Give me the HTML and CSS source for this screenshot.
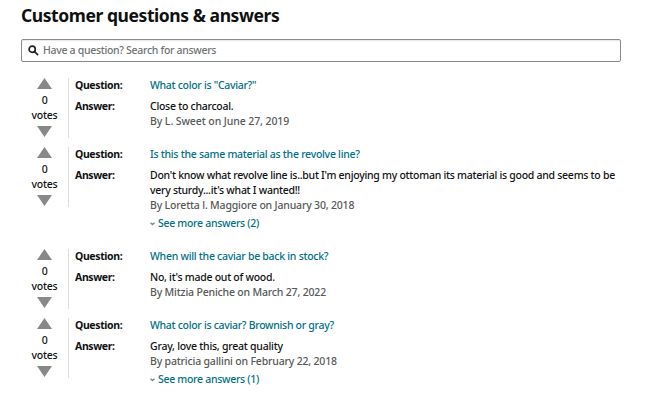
FILE: index.html
```html
<!DOCTYPE html>
<html lang="en">
<head>
<meta charset="utf-8">
<title>Customer questions &amp; answers</title>
<link rel="stylesheet" href="styles.css">
</head>
<body>
<main class="qa">
  <h1 class="title">Customer questions &amp; answers</h1>
  <div class="search">
    <svg class="search-icon" viewBox="0 0 11 11"><circle cx="4.2" cy="4.2" r="3.1"/><path d="M6.6 6.6 9.6 9.6"/></svg>
    <span class="placeholder">Have a question? Search for answers</span>
  </div>

  <section class="entry">
    <div class="votes"><i class="up"></i><span>0</span><span>votes</span><i class="down"></i></div>
    <div class="body">
      <div class="row"><b>Question:</b><div><a class="q1">What color is "Caviar?"</a></div></div>
      <div class="row"><b class="ans">Answer:</b><div><p class="a1">Close to charcoal.</p><p class="by by1">By L. Sweet on June 27, 2019</p></div></div>
    </div>
  </section>

  <section class="entry with-more">
    <div class="votes"><i class="up"></i><span>0</span><span>votes</span><i class="down"></i></div>
    <div class="body">
      <div class="row"><b>Question:</b><div><a class="q2">Is this the same material as the revolve line?</a></div></div>
      <div class="row"><b class="ans">Answer:</b><div><p class="a2">Don't know what revolve line is..but I'm enjoying my ottoman its material is good and seems to be</p><p class="a2b">very sturdy...it's what I wanted!!</p><p class="by by2">By Loretta l. Maggiore on January 30, 2018</p>
        <div class="more"><svg viewBox="0 0 5 4"><path d="M.5 .8 2.5 2.5 4.5 .8"/></svg><a>See more answers (2)</a></div></div></div>
    </div>
  </section>

  <section class="entry">
    <div class="votes"><i class="up"></i><span>0</span><span>votes</span><i class="down"></i></div>
    <div class="body">
      <div class="row"><b>Question:</b><div><a class="q3">When will the caviar be back in stock?</a></div></div>
      <div class="row"><b class="ans">Answer:</b><div><p class="a3">No, it's made out of wood.</p><p class="by by3">By Mitzia Peniche on March 27, 2022</p></div></div>
    </div>
  </section>

  <section class="entry with-more">
    <div class="votes"><i class="up"></i><span>0</span><span>votes</span><i class="down"></i></div>
    <div class="body">
      <div class="row"><b>Question:</b><div><a class="q4">What color is caviar? Brownish or gray?</a></div></div>
      <div class="row"><b class="ans">Answer:</b><div><p class="a4">Gray, love this, great quality</p><p class="by by4">By patricia gallini on February 22, 2018</p>
        <div class="more"><svg viewBox="0 0 5 4"><path d="M.5 .8 2.5 2.5 4.5 .8"/></svg><a>See more answers (1)</a></div></div></div>
    </div>
  </section>
</main>
</body>
</html>
```
FILE: styles.css
```css
* { box-sizing: border-box; }
body { margin: 0; background: #fff; color: #0f1111; font: 500 10.5px/15px "Noto Sans", sans-serif; letter-spacing: -0.27px; overflow: hidden; }
.qa { width: 600px; margin: 0 0 0 21px; padding-top: 3px; }
p { margin: 0; white-space: nowrap; }
.title { margin: 0; font-size: 17.5px; line-height: 24px; font-weight: 700; letter-spacing: -0.43px; white-space: nowrap; }
.search { display: flex; align-items: center; height: 23px; margin: 12px 0 16px; padding-left: 6px; gap: 4px; border: 1px solid #888c8c; border-radius: 2px; box-shadow: inset 0 1px 1px #e8eaea; }
.search-icon { width: 11px; height: 11px; fill: none; stroke: #222; stroke-width: 1.7; stroke-linecap: round; }
.placeholder { color: #6f7373; letter-spacing: -0.31px; }
.entry { display: flex; height: 60px; margin-bottom: 9px; }
.with-more { height: 84px; margin-bottom: 18px; }
.votes { display: flex; flex: none; flex-direction: column; align-items: center; width: 48px; height: 60px; border-right: 1px solid #ddd; text-align: center; }
.votes i { width: 15px; height: 11px; background: #888; flex: none; }
.up { clip-path: polygon(50% 0, 100% 100%, 0 100%); margin-bottom: 4px; }
.down { clip-path: polygon(0 0, 100% 0, 50% 100%); margin-top: 3px; }
.body { flex: none; padding-left: 6px; }
.row { display: flex; margin-bottom: 6px; }
.row b { flex: none; width: 75px; font-weight: 700; letter-spacing: -0.38px; }
a { color: #007185; white-space: nowrap; }
.by { color: #565959; letter-spacing: -0.18px; }
.by1 { letter-spacing: -0.09px; }
.q1, .q4 { letter-spacing: -0.3px; }
.a4 { letter-spacing: -0.24px; }
.more { display: flex; align-items: center; gap: 3px; margin-top: 3px; letter-spacing: -0.3px; }
.more svg { width: 5px; height: 4px; fill: none; stroke: #888; stroke-width: 1.4; }
```
